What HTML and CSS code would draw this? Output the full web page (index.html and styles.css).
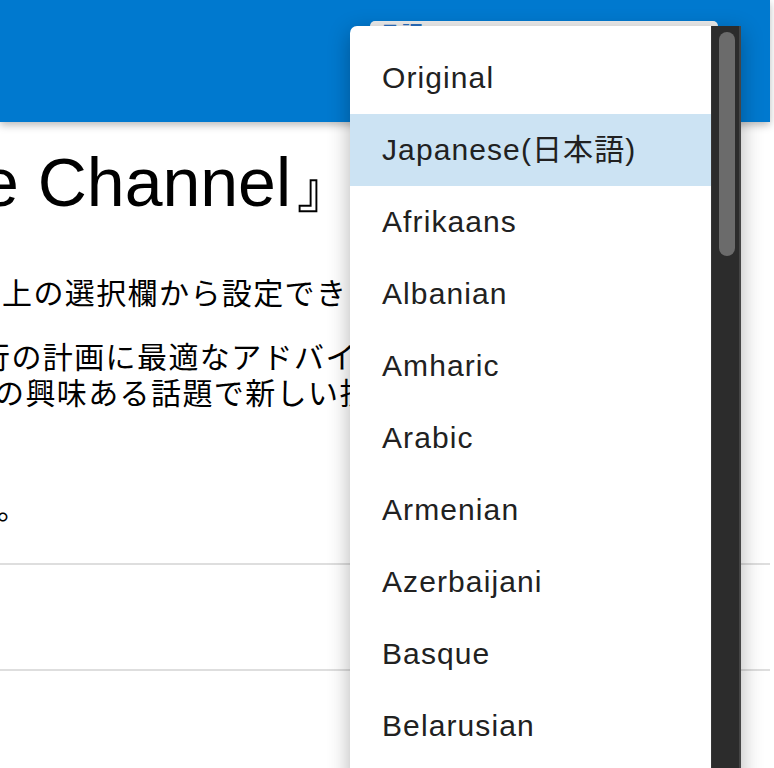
FILE: index.html
```html
<!DOCTYPE html>
<html lang="ja">
<head>
<meta charset="utf-8">
<title>言語</title>
<link rel="stylesheet" href="styles.css">
</head>
<body>
<header class="topbar">
  <div class="lang-select"><span class="lang-label">言語</span></div>
</header>
<main class="content">
  <h1 class="title">e Channel』</h1>
  <p class="para first">上の選択欄から設定できます。</p>
  <p class="para">
    <span class="line l2">行の計画に最適なアドバイスを</span>
    <span class="line l3">の興味ある話題で新しい投稿</span>
  </p>
  <p class="para end">。</p>
  <div class="rule r1"></div>
  <div class="rule r2"></div>
</main>
<div class="dropdown">
  <ul class="options">
    <li class="option">Original</li>
    <li class="option selected">Japanese(日本語)</li>
    <li class="option">Afrikaans</li>
    <li class="option">Albanian</li>
    <li class="option">Amharic</li>
    <li class="option">Arabic</li>
    <li class="option">Armenian</li>
    <li class="option">Azerbaijani</li>
    <li class="option">Basque</li>
    <li class="option">Belarusian</li>
    <li class="option">Bengali</li>
  </ul>
  <div class="scrollbar"><div class="thumb"></div></div>
</div>
</body>
</html>
```
FILE: styles.css
```css
html, body {
  margin: 0;
  padding: 0;
  background: #ffffff;
  overflow: hidden;
  height: 768px;
}
body {
  font-family: "Liberation Sans", "Noto Sans CJK JP", sans-serif;
  color: #000;
}
.topbar {
  width: 770px;
  height: 122px;
  background: #0079cf;
  box-shadow: 0 3px 8px rgba(0, 0, 0, 0.28);
  display: flex;
  align-items: flex-start;
  position: relative;
  z-index: 1;
}
.lang-select {
  margin: 21px 0 0 370px;
  width: 348px;
  height: 40px;
  background: #efefef;
  border-radius: 5px;
  box-sizing: border-box;
  padding: 0 0 0 9px;
}
.lang-label {
  display: block;
  font-family: "Noto Sans CJK JP", sans-serif;
  font-size: 22px;
  line-height: 24px;
  margin-top: -1px;
  color: #2a6fbf;
}
.content {
  width: 770px;
  overflow: hidden;
}
.title {
  margin: 21px 0 52px -19px;
  font-family: "Liberation Sans", sans-serif;
  font-weight: normal;
  font-size: 68px;
  line-height: 78px;
  white-space: nowrap;
}
.para {
  font-family: "Noto Sans CJK JP", sans-serif;
  font-size: 30px;
  line-height: 36px;
  letter-spacing: 1.4px;
  margin: 0 0 28px 0;
  white-space: nowrap;
}
.para.first {
  margin-left: 2px;
}
.line {
  display: block;
}
.l2 {
  margin-left: -20px;
}
.l3 {
  margin-left: -6px;
}
.para.end {
  margin: 79px 0 39px -3px;
}
.rule {
  height: 2px;
  background: #dedede;
}
.rule.r2 {
  margin-top: 104px;
}
.dropdown {
  position: absolute;
  left: 350px;
  top: 26px;
  width: 391px;
  height: 760px;
  background: #fff;
  border-radius: 7px 0 0 0;
  box-shadow: 0 6px 22px rgba(0, 0, 0, 0.3);
  display: flex;
  z-index: 2;
  overflow: hidden;
}
.options {
  list-style: none;
  margin: 0;
  padding: 16px 0 0 0;
  flex: 1;
}
.option {
  height: 72px;
  line-height: 72px;
  padding-left: 32px;
  font-family: "Liberation Sans", "Noto Sans CJK JP", sans-serif;
  font-size: 30px;
  letter-spacing: 1.1px;
  color: #212121;
  white-space: nowrap;
}
.option.selected {
  background: #cce3f3;
}
.scrollbar {
  width: 30px;
  box-sizing: border-box;
  background: #2c2c2c;
  border-left: 1px solid #363636;
  border-right: 2px solid #454545;
  padding: 6px 4px 0 7px;
}
.thumb {
  width: 16px;
  height: 224px;
  border-radius: 8px;
  background: #6b6b6b;
}
```
